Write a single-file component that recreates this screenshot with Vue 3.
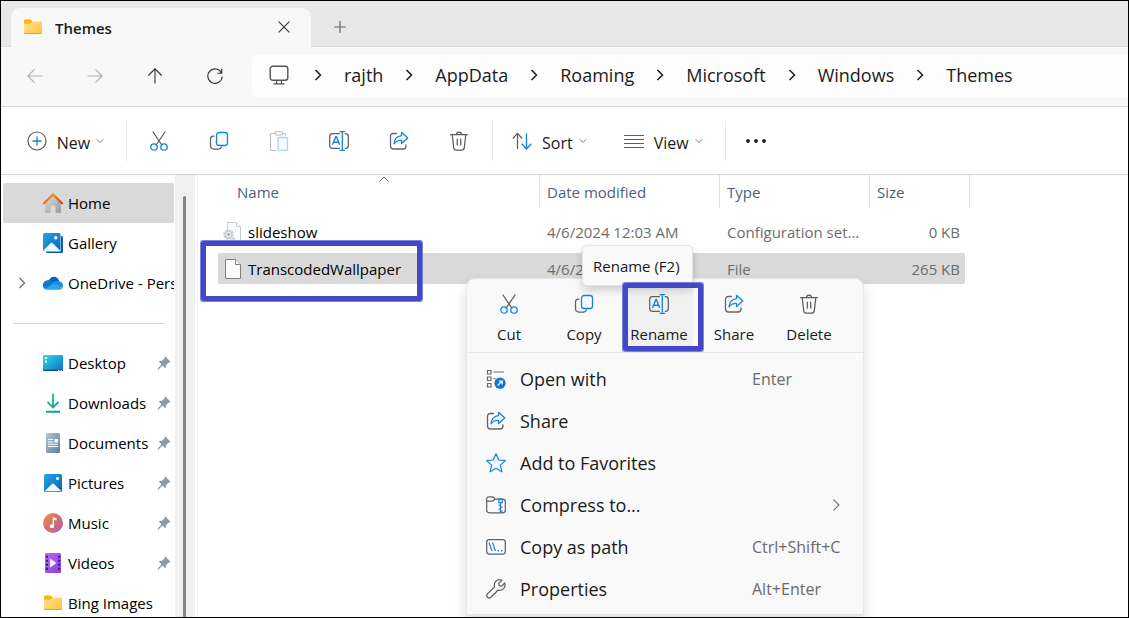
<script setup>
const crumbs = ['rajth', 'AppData', 'Roaming', 'Microsoft', 'Windows', 'Themes']

const actions = [
  { icon: 'cut', label: 'Cut' },
  { icon: 'copy', label: 'Copy' },
  { icon: 'paste', label: 'Paste', disabled: true },
  { icon: 'rename', label: 'Rename' },
  { icon: 'share', label: 'Share' },
  { icon: 'delete', label: 'Delete' },
]

const places = [
  { icon: 'home', label: 'Home', active: true },
  { icon: 'gallery', label: 'Gallery' },
  { icon: 'onedrive', label: 'OneDrive - Personal', expandable: true },
]

const pinned = [
  { icon: 'desktop', label: 'Desktop', pin: true },
  { icon: 'downloads', label: 'Downloads', pin: true },
  { icon: 'documents', label: 'Documents', pin: true },
  { icon: 'pictures', label: 'Pictures', pin: true },
  { icon: 'music', label: 'Music', pin: true },
  { icon: 'videos', label: 'Videos', pin: true },
  { icon: 'folder', label: 'Bing Images' },
]

const files = [
  { icon: 'config', name: 'slideshow', date: '4/6/2024 12:03 AM', type: 'Configuration set...', size: '0 KB' },
  { icon: 'file', name: 'TranscodedWallpaper', date: '4/6/2024 12:03 AM', type: 'File', size: '265 KB', selected: true },
]

const quick = [
  { icon: 'cut', label: 'Cut' },
  { icon: 'copy', label: 'Copy' },
  { icon: 'rename', label: 'Rename', hover: true },
  { icon: 'share', label: 'Share' },
  { icon: 'delete', label: 'Delete' },
]

const commands = [
  { icon: 'openwith', label: 'Open with', keys: 'Enter' },
  { icon: 'share', label: 'Share' },
  { icon: 'star', label: 'Add to Favorites' },
  { icon: 'zip', label: 'Compress to...', more: true },
  { icon: 'path', label: 'Copy as path', keys: 'Ctrl+Shift+C' },
  { icon: 'wrench', label: 'Properties', keys: 'Alt+Enter' },
]
</script>

<template>
  <div class="window">
    <svg class="sprite" aria-hidden="true">
      <defs>
        <linearGradient id="g-folder" x1="0" y1="0" x2="1" y2="1">
          <stop offset="0" stop-color="#ffe394" /><stop offset="1" stop-color="#ffc636" />
        </linearGradient>
        <linearGradient id="g-roof" x1="0" y1="0" x2="1" y2="1">
          <stop offset="0" stop-color="#f6a11a" /><stop offset="1" stop-color="#d2440f" />
        </linearGradient>
        <linearGradient id="g-wall" x1="0" y1="0" x2="1" y2="1">
          <stop offset="0" stop-color="#dcdcdc" /><stop offset="1" stop-color="#9a9a9a" />
        </linearGradient>
        <linearGradient id="g-blue" x1="0" y1="0" x2="1" y2="1">
          <stop offset="0" stop-color="#25a5ea" /><stop offset="1" stop-color="#0563b8" />
        </linearGradient>
        <linearGradient id="g-desk" x1="0" y1="0" x2="1" y2="1">
          <stop offset="0" stop-color="#33dbe6" /><stop offset="1" stop-color="#0a6ec6" />
        </linearGradient>
        <linearGradient id="g-down" gradientUnits="userSpaceOnUse" x1="3" y1="0" x2="17" y2="20">
          <stop offset="0" stop-color="#3cc98a" /><stop offset="1" stop-color="#0a9c93" />
        </linearGradient>
        <linearGradient id="g-doc" x1="0" y1="0" x2="1" y2="1">
          <stop offset="0" stop-color="#b3c4d8" /><stop offset="1" stop-color="#5f7d9d" />
        </linearGradient>
        <linearGradient id="g-music" x1="0" y1="0" x2="1" y2="1">
          <stop offset="0" stop-color="#f59256" /><stop offset="0.5" stop-color="#d4706c" /><stop offset="1" stop-color="#a35fb8" />
        </linearGradient>
        <linearGradient id="g-video" x1="0" y1="0" x2="1" y2="1">
          <stop offset="0" stop-color="#b56cf2" /><stop offset="1" stop-color="#8440e0" />
        </linearGradient>
      </defs>

      <symbol id="i-folder" viewBox="0 0 20 20">
        <path d="M1 4q0-1.500 1.200-1.500h4.800q.8 0 1.400.7L9.500 4.500H1z" fill="#f5ae0c" />
        <path d="M1 6h6.500l2-1.500H18q1 0 1 1V15q0 1.500-1 1.500H2q-1 0-1-1.500z" fill="url(#g-folder)" />
        <path d="M1 15.200V16q.3.900 1 .9h16q.8 0 1-.9v-.8q-.2.700-1 .7H2q-.8 0-1-.7z" fill="#e9a312" />
        <path d="M1 3.500v3.300h6.300l2.200-1.800L7.700 3z" fill="#fbb810" />
      </symbol>
      <symbol id="i-home" viewBox="0 0 20 20">
        <path d="M2 9l8-6.500L18 9v10q0 1-1 1h-4.500v-6q0-1.500-1.200-1.500H8.800q-1.300 0-1.300 1.500v6H3q-1 0-1-1z" fill="url(#g-wall)" />
        <path d="M1 10.200l9-8.700 9 8.700" fill="none" stroke="url(#g-roof)" stroke-width="2.200" stroke-linecap="round" stroke-linejoin="round" />
      </symbol>
      <symbol id="i-gallery" viewBox="0 0 20 20">
        <path d="M4 3h14.500q1.500 0 1.500 1.500v14q0 1.500-1.500 1.500H4.500Q3 20 3 18.500z" fill="#0a5ba8" />
        <rect x="0" y="0" width="18" height="18.500" rx="1.500" fill="#fff" />
        <rect x="0" y="0" width="17.500" height="18" rx="1.500" fill="url(#g-blue)" />
        <path d="M.5 17.200l7-7q1.100-1 2.200 0l7.300 7q-.5.800-1.500.8H2q-1 0-1.500-.8z" fill="#eef7fd" />
        <circle cx="12.800" cy="4.800" r="1.700" fill="#fff" />
      </symbol>
      <symbol id="i-onedrive" viewBox="0 0 20 20">
        <path d="M5.500 8C7 4 11.500 2 14.800 5.500q1.200 1.300 1.500 3L9 13.500z" fill="#0c5fb8" />
        <path d="M4.500 7.300Q9 5.800 12 10L3 16.500Q0 15.500 0 12.200 0 8 4.500 7.300z" fill="#0f78d0" />
        <path d="M10 9.500q3-2.500 6-1.300Q20 9 20 12.600q-.2 2.500-3 3.900L7 13z" fill="#1a8fe0" />
        <path d="M2 15.700L11 10.500q3 1 8.700 4Q18.700 16.700 16 16.700H4.300q-1.300 0-2.300-1z" fill="#28a8ea" />
      </symbol>
      <symbol id="i-desktop" viewBox="0 0 20 20">
        <rect x="0" y="2" width="20" height="16" rx="1" fill="url(#g-desk)" />
        <path d="M0 16.800h20v.4q0 .8-1 .8H1q-1 0-1-.8z" fill="#0a4a86" />
        <path d="M2 4h2v2H2zM2 7.500h2v2H2z" fill="#fff" />
        <path d="M15 17h1.300v1H15zM17.500 17h1.300v1h-1.300z" fill="#fff" />
      </symbol>
      <symbol id="i-downloads" viewBox="0 0 20 20">
        <path d="M10 0.500V14M4.500 9L10 14.500 15.500 9M3 18.800h14" fill="none" stroke="url(#g-down)" stroke-width="1.900" />
      </symbol>
      <symbol id="i-documents" viewBox="0 0 20 20">
        <rect x="3" y="0" width="14" height="20" rx="1.500" fill="url(#g-doc)" />
        <path d="M5 6.500h5M5 9h5M5 11.300h10M5 13.500h10" stroke="#fff" stroke-width="1.100" />
        <rect x="11.500" y="6" width="3.500" height="3.500" fill="#fff" />
      </symbol>
      <symbol id="i-pictures" viewBox="0 0 20 20">
        <rect x="1" y="1" width="18" height="18" rx="1.500" fill="url(#g-blue)" />
        <path d="M2 17.800l7-6.800q1-.9 2 0l7 6.800q-.5.500-1.200.5H3.200q-.7 0-1.200-.5z" fill="#f3f8fc" />
        <circle cx="14.500" cy="5.500" r="1.600" fill="#fff" />
      </symbol>
      <symbol id="i-music" viewBox="0 0 20 20">
        <circle cx="10" cy="10" r="10" fill="url(#g-music)" />
        <path d="M9.700 4.200l3.800.8v2.400l-2.500-.6v6.400a2.100 1.900 0 1 1-1.300-1.800z" fill="#fff" />
      </symbol>
      <symbol id="i-videos" viewBox="0 0 20 20">
        <rect x="2" y="0" width="16" height="20" rx="1.200" fill="url(#g-video)" />
        <path d="M3 2.800h2v2H3zM3 6.800h2v2H3zM3 10.800h2v2H3zM3 14.800h2v2H3zM15 2.800h2v2h-2zM15 6.800h2v2h-2zM15 10.800h2v2h-2zM15 14.800h2v2h-2z" fill="#3d1b78" />
        <path d="M7 5.500l6.500 4.500L7 14.500z" fill="#f4ecfc" />
      </symbol>
      <symbol id="i-pin" viewBox="0 0 14 14">
        <path d="M8.300.4l5.300 5.300q-.6 1-2 .8L9.200 9q.4 2-.8 3.200L5.600 9.500 1.800 13.200.5 13.500l.3-1.300 3.700-3.800L1.800 5.600Q3 4.400 5 4.800l2.500-2.400Q7.300 1 8.300.4z" fill="#8f9aa2" />
      </symbol>
      <symbol id="i-file" viewBox="0 0 20 20">
        <path d="M2.500.5h10L17.500 5.500v14h-15z" fill="#fbfbfa" stroke="#80807a" />
        <path d="M12.500.5v5h5" fill="#fff" stroke="#80807a" />
      </symbol>
      <symbol id="i-config" viewBox="0 0 20 20">
        <path d="M4.500.5h9L17.500 4.500v14h-13z" fill="#fcfcfc" stroke="#c9cbcc" />
        <path d="M13.500.5v4h4" fill="#fff" stroke="#c9cbcc" />
        <circle cx="5.500" cy="12.500" r="4.300" fill="#cdd4d9" stroke="#c5ccd0" stroke-width="2" stroke-dasharray="2 1.300" />
        <circle cx="5.500" cy="12.500" r="2.600" fill="#eef1f3" />
        <circle cx="5.500" cy="12.500" r="1.300" fill="#8e979c" />
        <path d="M9.500 14.500l3 1.500-1 3-3.500-.5z" fill="#d3d9dc" />
      </symbol>

      <symbol id="i-cut" viewBox="0 0 20 20">
        <path d="M4 1l8.800 13M16 1L7.200 14" fill="none" stroke="#5c5c5c" stroke-width="1.250" stroke-linecap="round" />
        <circle cx="5" cy="16" r="3.200" fill="none" stroke="#1583d8" stroke-width="1.300" />
        <circle cx="15" cy="16" r="3.200" fill="none" stroke="#1583d8" stroke-width="1.300" />
      </symbol>
      <symbol id="i-copy" viewBox="0 0 20 20">
        <path d="M5 5.200H4.200Q1.500 5.500 1.500 8v6.500q0 3.500 3.500 3.500h4.500q2.300 0 3-2" fill="none" stroke="#606060" stroke-width="1.250" stroke-linecap="round" />
        <rect x="7.500" y="1.500" width="11" height="13" rx="2.500" fill="#f5faff" stroke="#1583d8" stroke-width="1.300" />
      </symbol>
      <symbol id="i-paste" viewBox="0 0 20 20">
        <path d="M6 2.500H3q-1.500 0-1.500 1.500v14q0 1.500 1.500 1.500h4M14 2.500h1q1.300 0 1.300 1.500v1" fill="none" stroke="#bdbdbd" stroke-width="1.200" />
        <rect x="6" y=".8" width="7.500" height="3.200" rx="1.500" fill="#fff" stroke="#b5b5b5" stroke-width="1.100" />
        <rect x="9" y="6.500" width="9.500" height="13" rx="1.500" fill="#f7fbff" stroke="#abd3f3" stroke-width="1.300" />
      </symbol>
      <symbol id="i-rename" viewBox="0 0 20 20">
        <path d="M10.800 2.700H3.500Q.7 2.700.7 5.500v9q0 2.800 2.800 2.800h7.300M15.800 2.700h.7q2.800 0 2.800 2.800v9q0 2.800-2.800 2.800h-.7" fill="none" stroke="#606060" stroke-width="1.250" />
        <path d="M3.500 13.800L6.800 5.700h.6l3.300 8.100M4.600 11.200h5" fill="none" stroke="#1583d8" stroke-width="1.400" />
        <path d="M10.500.7h5.600M10.500 19.300h5.600M13.300.7v18.600" fill="none" stroke="#1583d8" stroke-width="1.300" />
      </symbol>
      <symbol id="i-share" viewBox="0 0 20 20">
        <path d="M7.500 2.500H4.500q-3 0-3 3v9.500q0 3 3 3h9.500q3 0 3-3v-1" fill="none" stroke="#666" stroke-width="1.300" stroke-linecap="round" />
        <path d="M12.500 1.300l6.300 5.600-6.300 5.600V9.300q-4.700-.3-7.500 3.500.6-7.300 7.500-8.200z" fill="#f3f9fe" stroke="#1583d8" stroke-width="1.300" stroke-linejoin="round" />
      </symbol>
      <symbol id="i-delete" viewBox="0 0 20 20">
        <path d="M1.500 3.500h17M7.500 3.500q0-2.500 2.500-2.500t2.500 2.500M3.200 3.500l1.500 13.200q.3 2.300 2.300 2.300h6q2 0 2.300-2.300l1.500-13.200M8.300 8v6M11.700 8v6" fill="none" stroke="#5c5c5c" stroke-width="1.250" stroke-linecap="round" />
      </symbol>
      <symbol id="i-new" viewBox="0 0 20 20">
        <circle cx="10" cy="10" r="9" fill="none" stroke="#5c5c5c" stroke-width="1.200" />
        <path d="M10 5.500v9M5.500 10h9" stroke="#1583d8" stroke-width="1.300" />
      </symbol>
      <symbol id="i-sort" viewBox="0 0 20 20">
        <path d="M5.500 18V2.500M.8 7.500L5.500 2.300l4.700 5.200" fill="none" stroke="#5c5c5c" stroke-width="1.200" />
        <path d="M14.500 2.500V18M9.800 12.800L14.500 18l4.700-5.200" fill="none" stroke="#1583d8" stroke-width="1.300" />
      </symbol>
      <symbol id="i-view" viewBox="0 0 20 20">
        <path d="M0 4.500h20M0 8.500h20M0 12.500h20M0 16.500h20" stroke="#5f5f5f" stroke-width="1" />
      </symbol>
      <symbol id="i-more" viewBox="0 0 20 20">
        <circle cx="2" cy="10" r="1.900" fill="#1b1b1b" /><circle cx="10" cy="10" r="1.900" fill="#1b1b1b" /><circle cx="18" cy="10" r="1.900" fill="#1b1b1b" />
      </symbol>
      <symbol id="i-openwith" viewBox="0 0 20 20">
        <path d="M1.500 1.500h3.500v3.500H1.500zM1.500 8h3.500v3.500H1.500zM1.500 14.500h3.500V18H1.500zM7.500 3h10.500M7.500 9.500h2" fill="none" stroke="#6a6a6a" stroke-width="1.200" />
        <circle cx="14" cy="14.200" r="5.600" fill="#0f76d4" />
        <path d="M11.700 16.500l4.300-4.300M12.800 12h3.400v3.400" fill="none" stroke="#fff" stroke-width="1.200" />
      </symbol>
      <symbol id="i-star" viewBox="0 0 20 20">
        <path d="M10 .8l2.800 6.200 6.600.6-5 4.500 1.500 6.700L10 15.300l-5.900 3.500 1.500-6.700-5-4.500 6.600-.6z" fill="#f5faff" stroke="#1583d8" stroke-width="1.250" stroke-linejoin="round" />
      </symbol>
      <symbol id="i-zip" viewBox="0 0 20 20">
        <path d="M.7 5V4.200Q.7 1.800 3 1.800h3q1.200 0 2 .9L9 4.200h7.500q2.800 0 2.800 2.600v8.400q0 2.600-2.800 2.600h-13Q.7 17.800.7 15.200V5M.7 6.200H6q1.500 0 3-2" fill="none" stroke="#606060" stroke-width="1.200" />
        <path d="M12.800 4.200h3.400v3.300h-3.400zM14.500 7.500v10.300M12.500 10h2M14.500 12h2M12.500 14h2M14.500 16h2" fill="none" stroke="#1583d8" stroke-width="1.250" />
      </symbol>
      <symbol id="i-path" viewBox="0 0 20 20">
        <rect x=".7" y="2.700" width="18.600" height="14.300" rx="2.500" fill="#fcfcfc" stroke="#606060" stroke-width="1.250" />
        <path d="M3 5.500l3 8.500M6.500 5.500l3 8.500" fill="none" stroke="#1583d8" stroke-width="1.200" />
        <path d="M11.500 13h1.500v1.500h-1.500zM15 13h1.500v1.500H15z" fill="#1583d8" />
      </symbol>
      <symbol id="i-wrench" viewBox="0 0 20 20">
        <path d="M15.800 1.300Q12.500-.2 9.900 2.300 7.700 4.500 8.600 7.800L1.500 14.900q-1.500 1.700 0 3.300t3.400.1l7-7.100q3.200.9 5.500-1.300Q20 7.200 18.700 4L15.500 7.200l-2.200-.5-.6-2.300z" fill="none" stroke="#606060" stroke-width="1.250" stroke-linejoin="round" />
      </symbol>
      <symbol id="i-pc" viewBox="0 0 20 20">
        <rect x="1.200" y="1.200" width="17.600" height="14" rx="2.500" fill="none" stroke="#555" stroke-width="1.400" />
        <path d="M7.500 15.500v3M12.500 15.500v3M4.500 18.800h11" fill="none" stroke="#555" stroke-width="1.200" />
      </symbol>
      <symbol id="i-back" viewBox="0 0 16 16">
        <path d="M15.500 8H1M7.500 1.300L.8 8l6.700 6.700" fill="none" stroke="currentColor" stroke-width="1.100" />
      </symbol>
      <symbol id="i-refresh" viewBox="0 0 16 16">
        <path d="M14.600 5.200A7.200 7.200 0 1 0 15.200 8.500M14.800.8v4.400h-4.400" fill="none" stroke="currentColor" stroke-width="1.100" />
      </symbol>
      <symbol id="i-close" viewBox="0 0 12 12">
        <path d="M.7.7l10.600 10.600M11.300.7L.7 11.300" fill="none" stroke="currentColor" stroke-width="1.100" />
      </symbol>
      <symbol id="i-plus" viewBox="0 0 12 12">
        <path d="M6 0v12M0 6h12" fill="none" stroke="currentColor" stroke-width="1.200" />
      </symbol>
      <symbol id="i-chev" viewBox="0 0 12 12">
        <path d="M3.500 1L8.500 6l-5 5" fill="none" stroke="currentColor" stroke-width="1.500" />
      </symbol>
      <symbol id="i-down" viewBox="0 0 8 8">
        <path d="M.8 2.300L4 5.500l3.200-3.200" fill="none" stroke="currentColor" stroke-width="1" />
      </symbol>
    </svg>

    <header class="tabs">
      <div class="tab">
        <svg class="ic"><use href="#i-folder" /></svg>
        <span class="tab-title">Themes</span>
        <button class="plain" aria-label="Close tab"><svg class="ic12"><use href="#i-close" /></svg></button>
      </div>
      <button class="plain new-tab" aria-label="New tab"><svg class="ic12"><use href="#i-plus" /></svg></button>
    </header>

    <nav class="nav">
      <div class="nav-buttons">
        <button class="plain" aria-label="Back" disabled><svg class="ic16"><use href="#i-back" /></svg></button>
        <button class="plain" aria-label="Forward" disabled><svg class="ic16 flip"><use href="#i-back" /></svg></button>
        <button class="plain" aria-label="Up"><svg class="ic16 up"><use href="#i-back" /></svg></button>
        <button class="plain" aria-label="Refresh"><svg class="ic16"><use href="#i-refresh" /></svg></button>
      </div>
      <div class="address">
        <svg class="ic"><use href="#i-pc" /></svg>
        <template v-for="(c, i) in crumbs" :key="c">
          <svg class="ic12 sep" :class="{ first: i === 0 }"><use href="#i-chev" /></svg>
          <a href="#">{{ c }}</a>
        </template>
      </div>
    </nav>

    <div class="toolbar">
      <button class="plain labelled new">
        <svg class="ic"><use href="#i-new" /></svg><span>New</span><svg class="ic8"><use href="#i-down" /></svg>
      </button>
      <div class="actions">
        <button v-for="a in actions" :key="a.label" class="plain" :aria-label="a.label" :disabled="a.disabled">
          <svg class="ic"><use :href="'#i-' + a.icon" /></svg>
        </button>
      </div>
      <div class="arrange">
        <button class="plain labelled">
          <svg class="ic"><use href="#i-sort" /></svg><span>Sort</span><svg class="ic8"><use href="#i-down" /></svg>
        </button>
        <button class="plain labelled">
          <svg class="ic"><use href="#i-view" /></svg><span>View</span><svg class="ic8"><use href="#i-down" /></svg>
        </button>
      </div>
      <button class="plain more" aria-label="See more"><svg class="ic"><use href="#i-more" /></svg></button>
    </div>

    <div class="body">
      <aside class="side">
        <a v-for="p in places" :key="p.label" href="#" class="place" :class="{ active: p.active }">
          <span class="twist"><svg v-if="p.expandable" class="ic12"><use href="#i-chev" /></svg></span>
          <svg class="ic"><use :href="'#i-' + p.icon" /></svg>
          <span class="place-name">{{ p.label }}</span>
        </a>
        <hr class="rule" />
        <a v-for="p in pinned" :key="p.label" href="#" class="place">
          <span class="twist"></span>
          <svg class="ic"><use :href="'#i-' + p.icon" /></svg>
          <span class="place-name">{{ p.label }}</span>
          <svg v-if="p.pin" class="pin"><use href="#i-pin" /></svg>
        </a>
      </aside>
      <div class="track"><div class="thumb"></div></div>

      <main class="main">
        <table class="files">
          <thead>
            <tr>
              <th>Name</th><th>Date modified</th><th>Type</th><th>Size</th>
            </tr>
          </thead>
          <tbody>
            <tr v-for="f in files" :key="f.name" :class="{ selected: f.selected }">
              <td class="name"><svg class="ic"><use :href="'#i-' + f.icon" /></svg>{{ f.name }}</td>
              <td>{{ f.date }}</td>
              <td>{{ f.type }}</td>
              <td class="size">{{ f.size }}</td>
            </tr>
          </tbody>
        </table>
        <svg class="sorted" viewBox="0 0 10 6"><path d="M.5 5.500L5 1l4.500 4.500" fill="none" stroke="#666" /></svg>
        <div class="mark mark-file"></div>

        <div class="menu">
          <div class="quick">
            <button v-for="q in quick" :key="q.label" class="plain" :class="{ hover: q.hover }">
              <svg class="ic"><use :href="'#i-' + q.icon" /></svg>{{ q.label }}
            </button>
            <div class="mark mark-rename"></div>
          </div>
          <div class="commands">
            <button v-for="c in commands" :key="c.label" class="plain command">
              <svg class="ic"><use :href="'#i-' + c.icon" /></svg>
              <span class="command-name">{{ c.label }}</span>
              <span v-if="c.keys" class="keys">{{ c.keys }}</span>
              <svg v-if="c.more" class="chevron" viewBox="0 0 12 12"><path d="M3.500.5L9 6l-5.500 5.500" fill="none" stroke="#777" stroke-width="1.100" /></svg>
            </button>
          </div>
        </div>
        <div class="tip" role="tooltip">Rename (F2)</div>
      </main>
    </div>
  </div>
</template>

<style>
body {
  background: #fff;
}
</style>

<style scoped>
.window {
  box-sizing: border-box;
  height: 100vh;
  border: 1px solid #000;
  display: flex;
  flex-direction: column;
  overflow: hidden;
  background: #fff;
  color: #1b1b1b;
  font-family: "Open Sans", "Noto Sans", sans-serif;
  font-size: 15px;
  line-height: 20px;
}
.window * {
  box-sizing: border-box;
}
.sprite {
  position: absolute;
  width: 0;
  height: 0;
}
svg {
  display: block;
  flex: none;
}
.ic {
  width: 20px;
  height: 20px;
}
.ic16 {
  width: 16px;
  height: 16px;
}
.ic12 {
  width: 12px;
  height: 12px;
}
.ic8 {
  width: 8px;
  height: 8px;
}
.plain {
  display: flex;
  align-items: center;
  justify-content: center;
  padding: 0;
  border: 0;
  background: none;
  color: inherit;
  font: inherit;
}
a {
  color: inherit;
  text-decoration: none;
}

.tabs {
  display: flex;
  flex: none;
  height: 46px;
  padding: 7px 10px 0;
  background: #e8e8e8;
  border-bottom: 1px solid #dadada;
}
.tab {
  display: flex;
  align-items: center;
  width: 300px;
  height: 39px;
  padding: 0 20px 2px 12px;
  border-radius: 9px 9px 0 0;
  background: #f8f8f8;
}
.tab-title {
  flex: 1;
  padding: 3px 0 0 12px;
  font-weight: 600;
}
.tab .plain {
  width: 14px;
  color: #333;
}
.new-tab {
  width: 58px;
  padding-bottom: 1px;
  color: #666;
}

.nav {
  display: flex;
  flex: none;
  height: 60px;
  padding: 8px 0;
  background: #f8f8f8;
  border-bottom: 1px solid #d4d4d4;
}
.nav-buttons {
  display: flex;
  width: 251px;
  padding: 0 0 2px 4px;
}
.nav-buttons .plain {
  width: 60px;
  color: #333;
}
.nav-buttons .plain:disabled {
  color: #b0b0b0;
}
.flip {
  transform: rotate(180deg);
}
.up {
  transform: rotate(90deg);
}
.address {
  display: flex;
  flex: 1;
  align-items: center;
  height: 42px;
  padding: 0 0 2px 17px;
  border-radius: 5px 0 0 5px;
  background: #fdfdfd;
  font-size: 18px;
  line-height: 24px;
}
.sep {
  margin: 0 20px;
}
.sep.first {
  margin-left: 23px;
}

.toolbar {
  display: flex;
  flex: none;
  height: 68px;
  padding: 14px 0 13px;
  border-bottom: 1px solid #d4d4d4;
  font-size: 16px;
}
.labelled {
  gap: 10px;
}
.labelled span {
  padding-top: 3px;
}
.labelled .ic8 {
  margin-left: -4px;
  color: #777;
}
.new {
  width: 126px;
  padding-left: 4px;
  border-right: 1px solid #e8e8e8;
}
.actions {
  display: flex;
  padding: 0 3px 0 2px;
  border-right: 1px solid #e8e8e8;
}
.actions .plain {
  width: 60px;
}
.arrange {
  display: flex;
  gap: 37px;
  padding: 0 22px 0 19px;
  border-right: 1px solid #e8e8e8;
}
.more {
  width: 61px;
}

.body {
  display: flex;
  flex: 1;
  min-height: 0;
}
.side {
  width: 174px;
  padding: 8px 1px 0 2px;
  overflow: hidden;
}
.place {
  display: flex;
  align-items: center;
  height: 40px;
  padding-right: 3px;
  border-radius: 2px;
  color: #000;
}
.place:nth-child(3) {
  padding-right: 0;
}
.active {
  background: #d9d9d9;
}
.twist {
  flex: none;
  width: 40px;
  padding-left: 13px;
  color: #777;
}
.place-name {
  flex: 1;
  padding-left: 5px;
  overflow: hidden;
  white-space: nowrap;
}
.pin {
  width: 14px;
  height: 14px;
}
.rule {
  height: 1px;
  margin: 20px 10px 19px;
  border: 0;
  background: #d4d4d4;
}
.track {
  flex: none;
  width: 20px;
  padding: 21px 8px 0;
  background: #f0f0f0;
}
.thumb {
  width: 3px;
  height: 100%;
  border-radius: 2px 2px 0 0;
  background: #858585;
}

.main {
  position: relative;
  flex: 1;
  margin-left: 2px;
  padding-left: 20px;
  border-left: 1px solid #f0f0f0;
}
.files {
  display: block;
}
.files thead,
.files tbody {
  display: block;
}
.files tr {
  display: grid;
  grid-template-columns: 322px 180px 150px 100px;
  width: 752px;
}
.files th {
  height: 33px;
  padding: 7px 7px 0;
  border-right: 1px solid #e0e0e0;
  color: #4c607a;
  font-weight: 400;
  text-align: left;
}
.files th:first-child {
  padding-left: 19px;
}
.files tbody tr {
  grid-template-columns: 322px 180px 150px 95px;
  width: 747px;
  height: 31px;
  margin-top: 6px;
  border-radius: 2px;
  align-items: center;
  color: #6d6d6d;
}
.files tbody tr:first-child {
  margin-top: 8px;
}
.files tbody tr.selected {
  background: #d9d9d9;
}
.files td {
  padding: 0 7px;
  white-space: nowrap;
}
.files .name {
  display: flex;
  align-items: center;
  gap: 5px;
  padding-left: 5px;
  color: #000;
}
.files .size {
  padding-right: 5px;
  text-align: right;
}
.sorted {
  position: absolute;
  top: 1px;
  left: 181px;
  width: 10px;
  height: 6px;
}
.mark {
  position: absolute;
  border: 5px solid #4149c9;
  border-radius: 2px;
  box-shadow: 0 0 0 1px #7d82dc;
  pointer-events: none;
}
.mark-file {
  top: 66px;
  left: 3px;
  width: 221px;
  height: 60px;
}
.menu {
  position: absolute;
  top: 103px;
  left: 268px;
  width: 398px;
  border: 1px solid #e6e6e6;
  border-radius: 9px 9px 0 0;
  background: #f9f9f9;
  box-shadow: 0 8px 14px rgba(0, 0, 0, 0.14);
}
.quick {
  position: relative;
  display: flex;
  gap: 7px;
  padding: 6px 8px 5px;
  border-bottom: 1px solid #e6e6e6;
}
.quick .plain {
  flex-direction: column;
  gap: 10px;
  width: 68px;
  height: 62px;
  padding-top: 6px;
  border-radius: 4px;
}
.quick .hover {
  background: #f0f0f0;
}
.mark-rename {
  z-index: 2;
  top: 4px;
  left: 156px;
  width: 80px;
  height: 68px;
}
.commands {
  padding: 5px 5px 4px;
  border-bottom: 1px solid #e6e6e6;
}
.command {
  width: 100%;
  height: 42px;
  padding: 0 14px;
  font-size: 18px;
  line-height: 24px;
  text-align: left;
}
.command-name {
  flex: 1;
  padding-left: 14px;
}
.keys {
  width: 92px;
  color: #6a6a6a;
  font-size: 16px;
  white-space: nowrap;
}
.chevron {
  width: 12px;
  height: 12px;
  margin-right: 2px;
}
.tip {
  position: absolute;
  z-index: 1;
  top: 70px;
  left: 384px;
  padding: 10px 12px 9px 10px;
  border: 1px solid #e4e4e4;
  border-radius: 5px;
  background: #f9f9f9;
  box-shadow: 0 4px 8px rgba(0, 0, 0, 0.18);
}
</style>
